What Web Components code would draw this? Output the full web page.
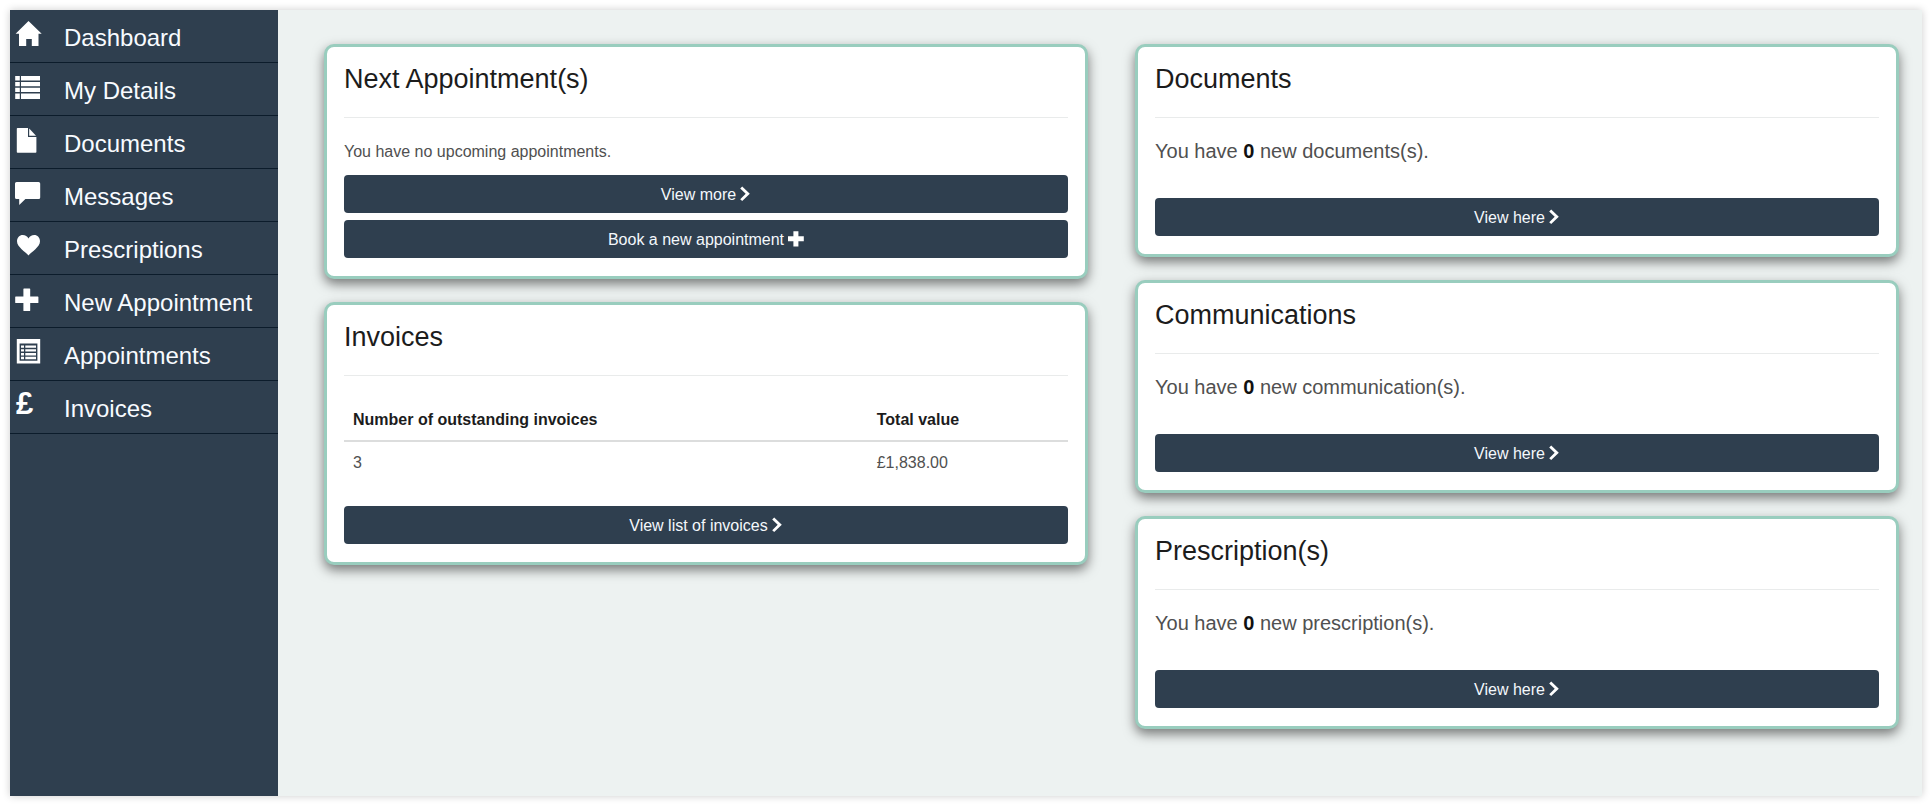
<!DOCTYPE html>
<html lang="en">
<head>
<meta charset="utf-8">
<meta name="viewport" content="width=device-width, initial-scale=1">
<title>Patient portal</title>
<style>
  html { background: #fff; }
  body {
    margin: 0;
    font: 16px/24px "Liberation Sans", Arial, sans-serif;
    color: #505050;
    --navy: #2f3f4f;
    --mint: #99cdbe;
    --ink: #1c1c1c;
  }
</style>
</head>
<body>
<portal-shell>
  <portal-nav slot="side">
    <portal-nav-item icon="home">Dashboard</portal-nav-item>
    <portal-nav-item icon="list">My Details</portal-nav-item>
    <portal-nav-item icon="file">Documents</portal-nav-item>
    <portal-nav-item icon="comment">Messages</portal-nav-item>
    <portal-nav-item icon="heart">Prescriptions</portal-nav-item>
    <portal-nav-item icon="plus">New Appointment</portal-nav-item>
    <portal-nav-item icon="listalt">Appointments</portal-nav-item>
    <portal-nav-item icon="pound">Invoices</portal-nav-item>
  </portal-nav>

  <portal-column>
    <portal-card heading="Next Appointment(s)">
      <portal-message>You have no upcoming appointments.</portal-message>
      <portal-button slot="actions" icon="chevron">View more</portal-button>
      <portal-button slot="actions" icon="add">Book a new appointment</portal-button>
    </portal-card>
    <portal-card heading="Invoices">
      <invoice-summary count="3" total="£1,838.00"></invoice-summary>
      <portal-button slot="actions" icon="chevron">View list of invoices</portal-button>
    </portal-card>
  </portal-column>

  <portal-column>
    <portal-card heading="Documents">
      <portal-message large>You have <b>0</b> new documents(s).</portal-message>
      <portal-button slot="actions" icon="chevron">View here</portal-button>
    </portal-card>
    <portal-card heading="Communications">
      <portal-message large>You have <b>0</b> new communication(s).</portal-message>
      <portal-button slot="actions" icon="chevron">View here</portal-button>
    </portal-card>
    <portal-card heading="Prescription(s)">
      <portal-message large>You have <b>0</b> new prescription(s).</portal-message>
      <portal-button slot="actions" icon="chevron">View here</portal-button>
    </portal-card>
  </portal-column>
</portal-shell>

<script>
const svg = (w, h, body) =>
  `<svg width="${w}" height="${h}" viewBox="0 0 ${w} ${h}" fill="currentColor" aria-hidden="true">${body}</svg>`;

const ICONS = {
  home: svg(26, 26, '<path d="M13.500 1 L26.700 13.800 H23.500 V26 H16.800 V19 H11.200 V26 H4 V13.800 H.6 Z"/>'),
  list: svg(26, 26, '<path d="M.2 3h4.600v4.600H.2zM6 3h19v4.600H6zM.2 9.100h4.600v4.200H.2zM6 9.100h19v4.200H6zM.2 14.800h4.600v4.200H.2zM6 14.800h19v4.200H6zM.2 20.500h4.600V26H.2zM6 20.500h19V26H6z"/>'),
  file: svg(26, 26, '<path d="M2.600 2H13v9h8.400v15q0 .8-.8.800H2.600q-.8 0-.8-.8V2.800q0-.8.800-.8z"/><path d="M14.200 2.600v7.200H21z"/>'),
  comment: svg(26, 26, '<path d="M1.600 3h22q1.600 0 1.600 1.600v13.800q0 1.600-1.600 1.600H10.400L4.200 26V20H1.600Q0 20 0 18.400V4.600Q0 3 1.600 3z"/>'),
  heart: svg(26, 26, '<path d="M13.500 23.500C10.500 19.800 2 15 2 9.200C2 5.600 4.600 3 7.700 3C10.300 3 12.400 4.300 13.500 6.500C14.600 4.300 16.700 3 19.300 3C22.400 3 25 5.600 25 9.200C25 15 16.500 19.800 13.500 23.500Z"/>'),
  plus: svg(26, 26, '<path d="M9 3.500h5.600q.6 0 .6.600v7.400h7.600q.6 0 .6.600v5.300q0 .6-.6.600h-7.600v7.400q0 .6-.6.600H9q-.6 0-.6-.6V18H.8q-.6 0-.6-.6v-5.300q0-.6.6-.6h7.600V4.100q0-.6.600-.6z"/>'),
  listalt: svg(26, 26, '<path fill-rule="evenodd" d="M1.800 1h23.400v24.600H1.800zM4.600 5.600v17.200h17.800V5.600z"/><path d="M6 7.400h3v2.400H6zM10.300 7.400h10.700v2.400H10.300zM6 11.200h3v2.400H6zM10.300 11.200h10.700v2.400H10.300zM6 15h3v2.400H6zM10.300 15h10.700v2.400H10.300zM6 18.800h3v2.400H6zM10.300 18.800h10.700v2.400H10.300z"/>'),
  pound: '<span class="pound" aria-hidden="true">£</span>',
  chevron: svg(11, 16, '<path d="M2.200 .500 L9.800 7.800 L2.200 15.100 L.200 13.200 L5.700 7.800 L.200 2.400 Z"/>'),
  add: svg(16, 16, '<path d="M5.400 .300h5v5h5.400v5h-5.400v5.300h-5v-5.300H0v-5h5.400z"/>')
};

class PortalElement extends HTMLElement {
  connectedCallback() {
    if (this.shadowRoot) return;
    this.attachShadow({ mode: "open" }).innerHTML = this.render();
  }
}

customElements.define("portal-shell", class extends PortalElement {
  render() {
    return `<style>
      :host { display: flex; margin: 10px; min-height: calc(100vh - 20px);
              background: #edf2f1; box-shadow: 0 0 8px rgba(0,0,0,.2); }
      aside { flex: 0 0 268px; display: flex; background: var(--navy); }
      main { flex: 1; min-width: 0; display: grid; align-items: start;
             grid-template-columns: repeat(2, minmax(0, 1fr));
             gap: 47px; padding: 34px 23px 34px 46px; box-sizing: border-box; }
      @media (max-width: 1000px) { main { grid-template-columns: minmax(0, 1fr); gap: 23px; } }
    </style>
    <aside><slot name="side"></slot></aside>
    <main><slot></slot></main>`;
  }
});

customElements.define("portal-nav", class extends PortalElement {
  render() {
    return `<style>
      :host { display: block; flex: 1; }
      nav { display: flex; flex-direction: column; }
    </style>
    <nav aria-label="Main"><slot></slot></nav>`;
  }
});

customElements.define("portal-nav-item", class extends PortalElement {
  render() {
    return `<style>
      :host { display: block; border-bottom: 1px solid #0c1c2b; }
      a { display: flex; gap: 23px; height: 52px; padding-left: 5px;
          color: #f8fbff; text-decoration: none; font-size: 24px; line-height: 30px; }
      .icon { flex: 0 0 26px; height: 26px; margin-top: 10px; color: #fff; }
      .label { margin-top: 13px; white-space: nowrap; }
      svg { display: block; overflow: visible; }
      .pound { display: block; padding-left: 1px; font-size: 31px; line-height: 26px; font-weight: bold; }
    </style>
    <a href="#"><span class="icon">${ICONS[this.getAttribute("icon")]}</span><span class="label"><slot></slot></span></a>`;
  }
});

customElements.define("portal-column", class extends PortalElement {
  render() {
    return `<style>
      :host { display: flex; flex-direction: column; gap: 23px; min-width: 0; }
    </style><slot></slot>`;
  }
});

customElements.define("portal-card", class extends PortalElement {
  render() {
    return `<style>
      :host { display: block; background: #fff; border: 3px solid var(--mint); border-radius: 10px;
              padding: 17px 17px 18px; box-shadow: 0 5px 12px rgba(0,0,0,.5); }
      h2 { margin: 0; font-size: 27px; line-height: 30px; font-weight: normal; color: var(--ink); }
      hr { margin: 23px 0 22px; border: 0; border-top: 1px solid #e9ebeb; }
      .actions { display: flex; flex-direction: column; gap: 7px; }
    </style>
    <section>
      <h2>${this.getAttribute("heading")}</h2>
      <hr>
      <slot></slot>
      <div class="actions"><slot name="actions"></slot></div>
    </section>`;
  }
});

customElements.define("portal-message", class extends PortalElement {
  render() {
    return `<style>
      :host { display: block; margin-bottom: 11px; }
      :host([large]) { margin-bottom: 36px; font-size: 20px; line-height: 22px; }
      p { margin: 0; }
      ::slotted(b) { color: #111; }
    </style><p><slot></slot></p>`;
  }
});

customElements.define("portal-button", class extends PortalElement {
  render() {
    return `<style>
      :host { display: block; }
      button { display: flex; align-items: center; justify-content: center; gap: 4px;
               width: 100%; height: 38px; padding: 0; border: 0; border-radius: 4px;
               background: var(--navy); color: #f4f8fc; font: inherit; cursor: pointer; }
      span { padding-top: 1px; }
      svg { display: block; color: #fff; }
    </style>
    <button type="button"><span><slot></slot></span>${ICONS[this.getAttribute("icon")]}</button>`;
  }
});

customElements.define("invoice-summary", class extends PortalElement {
  render() {
    return `<style>
      :host { display: block; margin-bottom: 22px; }
      table { width: 100%; border-collapse: separate; border-spacing: 0; }
      th, td { padding: 9px; text-align: left; }
      th { padding-top: 10px; padding-bottom: 8px; border-bottom: 2px solid #dcdddd; color: var(--ink); }
    </style>
    <table>
      <thead><tr><th scope="col">Number of outstanding invoices</th><th scope="col">Total value</th></tr></thead>
      <tbody><tr><td>${this.getAttribute("count")}</td><td>${this.getAttribute("total")}</td></tr></tbody>
    </table>`;
  }
});
</script>
</body>
</html>
